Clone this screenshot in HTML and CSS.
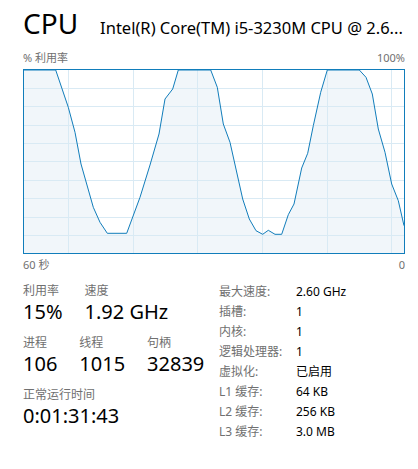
FILE: index.html
```html
<!DOCTYPE html>
<html lang="zh-CN">
<head>
    <meta charset="UTF-8">
    <title>CPU</title>
    <link rel="stylesheet" href="styles.css">
</head>
<body>

<header class="head">
    <h1 class="head-title">CPU</h1>
    <div class="head-name">Intel(R) Core(TM) i5-3230M CPU @ 2.6...</div>
</header>

<div class="graph-labels">
    <span>% 利用率</span>
    <span>100%</span>
</div>

<div class="graph">
    <svg viewBox="0 0 380 183" width="380" height="183">
        <!-- area under the curve -->
        <polygon class="graph-fill" points="0,0 31.7,0 44.3,37.3 51,62.3 57,94 69.3,137.3 76,152.3 83.3,163.3 102.7,163.3 116,127.3 126,95 135,64 141,29 148.7,19 154.3,0 186.7,0 193.3,17.3 199.3,54 206,72.3 218.7,129 225.3,149 232,160.7 238.7,164.3 244.3,160.3 251,164.3 257.7,164.3 264.3,144.7 270,134 277.7,98 283.7,83.3 289.3,55.7 296.7,22.3 303.3,0 335.3,0 342,7.3 348.3,24 354.3,59 361,82.3 367.7,114 374.3,130.7 380,155.7 380,183 0,183"/>
        <g class="graph-grid">
            <line x1="44.5" y1="0" x2="44.5" y2="183"/>
            <line x1="109.5" y1="0" x2="109.5" y2="183"/>
            <line x1="173.5" y1="0" x2="173.5" y2="183"/>
            <line x1="238.5" y1="0" x2="238.5" y2="183"/>
            <line x1="303.5" y1="0" x2="303.5" y2="183"/>
            <line x1="367.5" y1="0" x2="367.5" y2="183"/>
            <line x1="0" y1="18.5" x2="380" y2="18.5"/>
            <line x1="0" y1="36.5" x2="380" y2="36.5"/>
            <line x1="0" y1="55.5" x2="380" y2="55.5"/>
            <line x1="0" y1="73.5" x2="380" y2="73.5"/>
            <line x1="0" y1="91.5" x2="380" y2="91.5"/>
            <line x1="0" y1="110.5" x2="380" y2="110.5"/>
            <line x1="0" y1="128.5" x2="380" y2="128.5"/>
            <line x1="0" y1="147.5" x2="380" y2="147.5"/>
            <line x1="0" y1="165.5" x2="380" y2="165.5"/>
        </g>
        <polyline class="graph-line" points="0,0 31.7,0 44.3,37.3 51,62.3 57,94 69.3,137.3 76,152.3 83.3,163.3 102.7,163.3 116,127.3 126,95 135,64 141,29 148.7,19 154.3,0 186.7,0 193.3,17.3 199.3,54 206,72.3 218.7,129 225.3,149 232,160.7 238.7,164.3 244.3,160.3 251,164.3 257.7,164.3 264.3,144.7 270,134 277.7,98 283.7,83.3 289.3,55.7 296.7,22.3 303.3,0 335.3,0 342,7.3 348.3,24 354.3,59 361,82.3 367.7,114 374.3,130.7 380,155.7"/>
    </svg>
</div>

<div class="graph-labels graph-labels-bottom">
    <span>60 秒</span>
    <span>0</span>
</div>

<div class="stats">
    <div class="stats-left">
        <div class="stat-row">
            <div class="stat">
                <div class="stat-label">利用率</div>
                <div class="stat-value">15%</div>
            </div>
            <div class="stat">
                <div class="stat-label">速度</div>
                <div class="stat-value">1.92 GHz</div>
            </div>
        </div>
        <div class="stat-row">
            <div class="stat">
                <div class="stat-label">进程</div>
                <div class="stat-value">106</div>
            </div>
            <div class="stat">
                <div class="stat-label">线程</div>
                <div class="stat-value">1015</div>
            </div>
            <div class="stat">
                <div class="stat-label">句柄</div>
                <div class="stat-value">32839</div>
            </div>
        </div>
        <div class="stat-row">
            <div class="stat">
                <div class="stat-label">正常运行时间</div>
                <div class="stat-value">0:01:31:43</div>
            </div>
        </div>
    </div>

    <div class="specs">
        <span class="spec-label">最大速度:</span><span class="spec-value">2.60 GHz</span>
        <span class="spec-label">插槽:</span><span class="spec-value">1</span>
        <span class="spec-label">内核:</span><span class="spec-value">1</span>
        <span class="spec-label">逻辑处理器:</span><span class="spec-value">1</span>
        <span class="spec-label">虚拟化:</span><span class="spec-value">已启用</span>
        <span class="spec-label">L1 缓存:</span><span class="spec-value">64 KB</span>
        <span class="spec-label">L2 缓存:</span><span class="spec-value">256 KB</span>
        <span class="spec-label">L3 缓存:</span><span class="spec-value">3.0 MB</span>
    </div>
</div>

</body>
</html>
```

FILE: styles.css
```css
body {
    margin: 0;
    padding: 0 13px 0 23px;
    background-color: #fff;
    color: #000;
    font-family: "Noto Sans", "Noto Sans CJK SC", sans-serif;
}
.head {
    display: flex;
    align-items: baseline;
    gap: 22px;
    height: 46px;
}
.head-title {
    margin: 0;
    font-size: 28px;
    font-weight: 400;
    line-height: 46px;
}
.head-name {
    font-size: 16.5px;
    white-space: nowrap;
}
.graph-labels {
    display: flex;
    justify-content: space-between;
    font-size: 11px;
    line-height: 23px;
    color: #707070;
}
.graph-labels-bottom {
    line-height: 21px;
}
.graph {
    border: 1px solid #117dbb;
    width: 380px;
    height: 183px;
}
.graph svg {
    display: block;
}
.graph-fill {
    fill: #f1f6fa;
}
.graph-grid line {
    stroke: #d9eaf4;
    stroke-width: 1;
    shape-rendering: crispEdges;
}
.graph-line {
    fill: none;
    stroke: #117dbb;
    stroke-width: 1;
}
.stats {
    display: flex;
    margin-top: 8px;
}
.stats-left {
    width: 196px;
    display: flex;
    flex-direction: column;
    gap: 10px;
}
.stat-row {
    display: flex;
    gap: 22px;
}
.stat-label {
    font-size: 12px;
    line-height: 16px;
    color: #707070;
}
.stat-value {
    font-size: 20px;
    line-height: 26px;
}
.specs {
    display: grid;
    grid-template-columns: 77px auto;
    grid-auto-rows: 20px;
    align-items: center;
    align-content: start;
    margin-top: -2px;
    font-size: 12px;
}
.spec-label {
    color: #707070;
}
```
